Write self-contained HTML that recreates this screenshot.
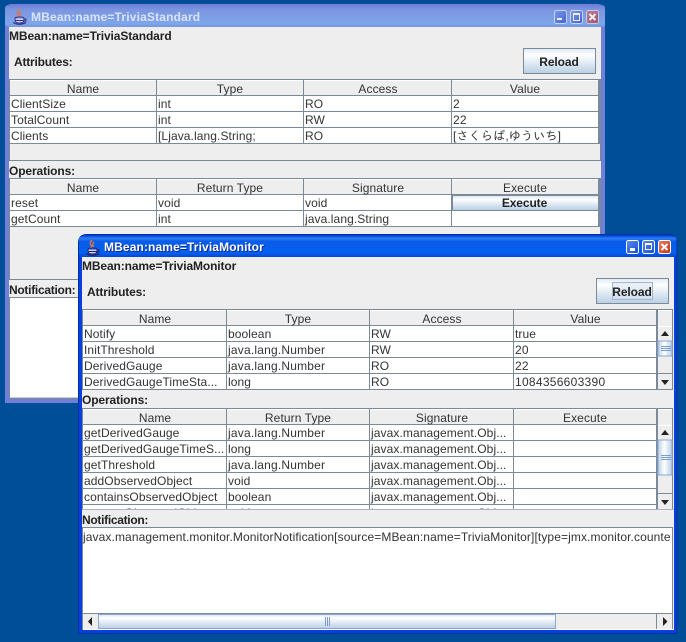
<!DOCTYPE html>
<html><head><meta charset="utf-8"><title>MBean windows</title>
<style>
html,body{margin:0;padding:0;background:#004e98;width:686px;height:642px;overflow:hidden}
svg{display:block}
text{font-family:"Liberation Sans","IPAGothic","Noto Sans CJK JP",sans-serif;font-size:12px;fill:#333;letter-spacing:.09px}
.b{font-weight:bold;fill:#222;letter-spacing:-.1px}
.n{letter-spacing:-.28px}
.c{text-anchor:middle}
.l{fill:#7a8a99}
.h{fill:#eee}
.w{fill:#fff}
.d{letter-spacing:.2px}
</style></head><body>
<svg width="686" height="642" viewBox="0 0 686 642" xmlns="http://www.w3.org/2000/svg">
<defs>
<linearGradient id="tI" x1="0" y1="0" x2="0" y2="1"><stop offset="0" stop-color="#6b80d8"/><stop offset=".2" stop-color="#7b95e0"/><stop offset=".85" stop-color="#7ea6ea"/><stop offset="1" stop-color="#7296e0"/></linearGradient>
<linearGradient id="tA" x1="0" y1="0" x2="0" y2="1"><stop offset="0" stop-color="#0a4fd8"/><stop offset=".12" stop-color="#2a80f5"/><stop offset=".25" stop-color="#0a5ce8"/><stop offset=".8" stop-color="#0560f0"/><stop offset="1" stop-color="#0348d0"/></linearGradient>
<linearGradient id="btn" x1="0" y1="0" x2="0" y2="1"><stop offset="0" stop-color="#dde8f2"/><stop offset=".25" stop-color="#fff"/><stop offset="1" stop-color="#b8cfe5"/></linearGradient>
<linearGradient id="sb" x1="0" y1="0" x2="0" y2="1"><stop offset="0" stop-color="#dde8f2"/><stop offset=".25" stop-color="#fff"/><stop offset="1" stop-color="#b8cfe5"/></linearGradient>
<linearGradient id="sv" x1="0" y1="0" x2="1" y2="0"><stop offset="0" stop-color="#b8cfe5"/><stop offset=".45" stop-color="#fff"/><stop offset="1" stop-color="#b8cfe5"/></linearGradient>
<linearGradient id="minA" x1="0" y1="0" x2="1" y2="1"><stop offset="0" stop-color="#5c8af0"/><stop offset="1" stop-color="#1c4cd0"/></linearGradient>
<linearGradient id="clA" x1="0" y1="0" x2="1" y2="1"><stop offset="0" stop-color="#e88060"/><stop offset="1" stop-color="#c83010"/></linearGradient>
<linearGradient id="minI" x1="0" y1="0" x2="1" y2="1"><stop offset="0" stop-color="#7e9ae8"/><stop offset="1" stop-color="#3f63d0"/></linearGradient>
<linearGradient id="clI" x1="0" y1="0" x2="1" y2="1"><stop offset="0" stop-color="#b88098"/><stop offset="1" stop-color="#9c5270"/></linearGradient>
<clipPath id="clipOps"><rect x="82" y="408" width="592" height="101"/></clipPath>
</defs>
<rect width="686" height="642" fill="#004e98"/>

<!-- BACK WINDOW -->
<path d="M5 403V11Q5 4 12 4H597Q605 4 605 11V403Z" fill="#6f80d6"/>
<rect x="5" y="5" width="600" height="22" fill="url(#tI)" rx="3"/>
<rect x="9" y="27" width="592" height="372" fill="#eee"/>
<g transform="translate(12,9)">
<path d="M7 0Q4 3 6 5T5 8M9 2Q7 4 8.500 7" fill="none" stroke="#e8703f" stroke-width="1.300"/>
<ellipse cx="7.500" cy="9" rx="4.500" ry="1" fill="none" stroke="#35358c"/>
<path d="M3 9.500V11Q3 14 7.500 14T12 11V9.500" fill="#c8d0f0" stroke="#35358c"/>
<path d="M3.500 11.500H11.500" stroke="#35358c"/>
<path d="M12 10H14V12H12" fill="none" stroke="#35358c"/>
<path d="M1 13.500Q7 17 14 13.500" fill="none" stroke="#35358c" stroke-width="1.300"/>
</g>
<text x="31" y="21" class="b" style="fill:#d9e4fa;letter-spacing:.17px">MBean:name=TriviaStandard</text>
<rect x="554.500" y="10.500" width="12" height="13" rx="2" fill="url(#minI)" stroke="#c5d2f2"/><rect x="557" y="18" width="5" height="2" fill="#eee"/>
<rect x="570.500" y="10.500" width="12" height="13" rx="2" fill="url(#minI)" stroke="#c5d2f2"/><rect x="573.500" y="13.500" width="6" height="7" fill="none" stroke="#eee"/><rect x="573" y="13" width="7" height="2" fill="#eee"/>
<rect x="586.500" y="10.500" width="12" height="13" rx="2" fill="url(#clI)" stroke="#d0c5d8"/><path d="M589.500 14L595.500 20M595.500 14L589.500 20" stroke="#eee" stroke-width="2"/>

<text x="9" y="40" class="b">MBean:name=TriviaStandard</text>
<text x="14" y="66" class="b" style="letter-spacing:-.2px">Attributes:</text>
<rect x="523.500" y="48.500" width="72" height="25" fill="url(#btn)" stroke="#7a8a99"/>
<text x="559" y="66" class="b c">Reload</text>

<!-- back attributes table -->
<rect x="9" y="79" width="592" height="82" class="l"/>
<rect x="10" y="80" width="590" height="80" class="h"/>
<rect x="10" y="80" width="589" height="64" class="w"/>
<rect x="10" y="80" width="589" height="15" class="h"/>
<rect x="10" y="80" width="589" height="1" class="w"/>
<rect x="10" y="95" width="589" height="1" class="l"/><rect x="10" y="111" width="589" height="1" class="l"/><rect x="10" y="127" width="589" height="1" class="l"/><rect x="10" y="143" width="589" height="1" class="l"/>
<rect x="156" y="80" width="1" height="64" class="l"/><rect x="303" y="80" width="1" height="64" class="l"/><rect x="451" y="80" width="1" height="64" class="l"/><rect x="598" y="80" width="2" height="64" class="l"/>
<text x="83" y="93" class="c">Name</text><text x="230" y="93" class="c">Type</text><text x="378" y="93" class="c">Access</text><text x="525" y="93" class="c">Value</text>
<text x="11" y="108">ClientSize</text><text x="158" y="108">int</text><text x="305" y="108">RO</text><text x="453" y="108">2</text>
<text x="11" y="124">TotalCount</text><text x="158" y="124">int</text><text x="305" y="124">RW</text><text x="453" y="124" class="d">22</text>
<text x="11" y="140">Clients</text><text x="158" y="140">[Ljava.lang.String;</text><text x="305" y="140">RO</text><text x="453" y="140" style="letter-spacing:.2px">[さくらば,ゆういち]</text>

<text x="9" y="175" class="b" style="letter-spacing:-.12px">Operations:</text>
<!-- back operations table -->
<rect x="9" y="178" width="592" height="102" class="l"/>
<rect x="10" y="179" width="590" height="100" class="h"/>
<rect x="10" y="179" width="589" height="48" class="w"/>
<rect x="10" y="179" width="589" height="15" class="h"/>
<rect x="10" y="179" width="589" height="1" class="w"/>
<rect x="10" y="194" width="589" height="1" class="l"/><rect x="10" y="210" width="589" height="1" class="l"/><rect x="10" y="226" width="589" height="1" class="l"/>
<rect x="156" y="179" width="1" height="48" class="l"/><rect x="303" y="179" width="1" height="48" class="l"/><rect x="451" y="179" width="1" height="48" class="l"/><rect x="598" y="179" width="2" height="48" class="l"/>
<text x="83" y="192" class="c">Name</text><text x="230" y="192" class="c">Return Type</text><text x="378" y="192" class="c">Signature</text><text x="525" y="192" class="c">Execute</text>
<text x="11" y="207">reset</text><text x="158" y="207">void</text><text x="305" y="207">void</text>
<text x="11" y="223">getCount</text><text x="158" y="223">int</text><text x="305" y="223">java.lang.String</text>
<rect x="452" y="195" width="147" height="16" class="l"/><rect x="453" y="196" width="145" height="14" fill="url(#btn)"/>
<text x="524.500" y="207" class="b c">Execute</text>

<rect x="9" y="279" width="592" height="18" fill="#eee"/>
<rect x="9" y="279" width="592" height="1" class="l"/>
<text x="9" y="294" class="b n">Notification:</text>
<rect x="9" y="297" width="592" height="102" class="l"/>
<rect x="10" y="298" width="590" height="100" class="w"/>
<rect x="10" y="397" width="590" height="1" fill="#c8ccdc"/>

<!-- FRONT WINDOW -->
<path d="M78 634V243Q78 234 87 234H669Q677.500 234 677.500 243V634Z" fill="#00309c"/>
<path d="M79 633V243Q79 235 87 235H669Q676.500 235 676.500 243V633Z" fill="#0840e0"/>
<rect x="79" y="236" width="597.500" height="21" fill="url(#tA)" rx="3"/>
<rect x="82" y="257" width="592" height="373" fill="#eee"/>
<g transform="translate(85,240)">
<path d="M7 0Q4 3 6 5T5 8M9 2Q7 4 8.500 7" fill="none" stroke="#f07a40" stroke-width="1.300"/>
<ellipse cx="7.500" cy="9" rx="4.500" ry="1" fill="none" stroke="#25256c"/>
<path d="M3 9.500V11Q3 14 7.500 14T12 11V9.500" fill="#c8d0f0" stroke="#25256c"/>
<path d="M3.500 11.500H11.500" stroke="#25256c"/>
<path d="M12 10H14V12H12" fill="none" stroke="#25256c"/>
<path d="M1 13.500Q7 17 14 13.500" fill="none" stroke="#25256c" stroke-width="1.300"/>
</g>
<text x="105" y="252" class="b" style="fill:#0a2a90;letter-spacing:.12px">MBean:name=TriviaMonitor</text>
<text x="104" y="251" class="b" style="fill:#fff;letter-spacing:.12px">MBean:name=TriviaMonitor</text>
<rect x="626.500" y="240.500" width="12" height="13" rx="2" fill="url(#minA)" stroke="#fff"/><rect x="630" y="248" width="5" height="3" fill="#fff"/>
<rect x="642.500" y="240.500" width="12" height="13" rx="2" fill="url(#minA)" stroke="#fff"/><rect x="645.500" y="243.500" width="6" height="6" fill="none" stroke="#fff"/><rect x="645" y="243" width="7" height="2" fill="#fff"/>
<rect x="658.500" y="240.500" width="12" height="13" rx="2" fill="url(#clA)" stroke="#fff"/><path d="M661.500 244L667.500 250M667.500 244L661.500 250" stroke="#fff" stroke-width="2"/>

<text x="82" y="270" class="b" style="letter-spacing:-.12px">MBean:name=TriviaMonitor</text>
<text x="87" y="296" class="b" style="letter-spacing:-.15px">Attributes:</text>
<rect x="596.500" y="278.500" width="72" height="25" fill="url(#btn)" stroke="#7a8a99"/>
<rect x="612.500" y="282.500" width="40" height="17" fill="#d8e4ef" fill-opacity=".5" stroke="#a3b8cc"/>
<text x="632" y="296" class="b c">Reload</text>

<!-- front attributes table -->
<rect x="82" y="309" width="591" height="81" class="l"/>
<rect x="83" y="310" width="589" height="79" class="h"/>
<rect x="83" y="325" width="574" height="64" class="w"/>
<rect x="83" y="310" width="589" height="1" class="w"/>
<rect x="83" y="325" width="574" height="1" class="l"/><rect x="83" y="341" width="574" height="1" class="l"/><rect x="83" y="357" width="574" height="1" class="l"/><rect x="83" y="373" width="574" height="1" class="l"/>
<rect x="83" y="389" width="590" height="1" class="l"/>
<rect x="226" y="310" width="1" height="79" class="l"/><rect x="369" y="310" width="1" height="79" class="l"/><rect x="513" y="310" width="1" height="79" class="l"/><rect x="656" y="310" width="2" height="79" class="l"/>
<text x="155" y="323" class="c">Name</text><text x="298" y="323" class="c">Type</text><text x="442" y="323" class="c">Access</text><text x="585.500" y="323" class="c">Value</text>
<text x="84" y="338">Notify</text><text x="228" y="338">boolean</text><text x="371" y="338">RW</text><text x="515" y="338">true</text>
<text x="84" y="354">InitThreshold</text><text x="228" y="354" class="d">java.lang.Number</text><text x="371" y="354">RW</text><text x="515" y="354" class="d">20</text>
<text x="84" y="370">DerivedGauge</text><text x="228" y="370" class="d">java.lang.Number</text><text x="371" y="370">RO</text><text x="515" y="370" class="d">22</text>
<text x="84" y="386">DerivedGaugeTimeSta...</text><text x="228" y="386">long</text><text x="371" y="386">RO</text><text x="515" y="386" style="letter-spacing:.28px">1084356603390</text>
<!-- attr scrollbar -->
<rect x="658" y="326" width="14" height="15" fill="#eee"/><rect x="658" y="326" width="14" height="1" class="w"/><path d="M661 336H669L665 331Z" fill="#222"/>
<rect x="658" y="341" width="14" height="15" fill="url(#sv)" stroke="#8aa6d8" stroke-width="1"/>
<path d="M661 346.500H671M661 348.500H671M661 350.500H671" stroke="#7a9ccf"/>
<rect x="658" y="373" width="14" height="16" fill="#eee"/><rect x="658" y="373" width="14" height="1" class="l"/><path d="M661 380H669L665 385Z" fill="#222"/>

<text x="82" y="404" class="b" style="letter-spacing:-.12px">Operations:</text>
<!-- front ops table -->
<g clip-path="url(#clipOps)">
<rect x="82" y="408" width="591" height="102" class="l"/>
<rect x="83" y="409" width="589" height="100" class="h"/>
<rect x="83" y="424" width="574" height="90" class="w"/>
<rect x="83" y="409" width="589" height="1" class="w"/>
<rect x="83" y="424" width="574" height="1" class="l"/><rect x="83" y="440" width="574" height="1" class="l"/><rect x="83" y="456" width="574" height="1" class="l"/><rect x="83" y="472" width="574" height="1" class="l"/><rect x="83" y="488" width="574" height="1" class="l"/><rect x="83" y="504" width="574" height="1" class="l"/>
<rect x="226" y="409" width="1" height="100" class="l"/><rect x="369" y="409" width="1" height="100" class="l"/><rect x="513" y="409" width="1" height="100" class="l"/><rect x="656" y="409" width="2" height="100" class="l"/>
<text x="155" y="422" class="c">Name</text><text x="298" y="422" class="c">Return Type</text><text x="442" y="422" class="c">Signature</text><text x="585" y="422" class="c">Execute</text>
<text x="84" y="437">getDerivedGauge</text><text x="228" y="437" class="d">java.lang.Number</text><text x="371" y="437">javax.management.Obj...</text>
<text x="84" y="453">getDerivedGaugeTimeS...</text><text x="228" y="453">long</text><text x="371" y="453">javax.management.Obj...</text>
<text x="84" y="469">getThreshold</text><text x="228" y="469" class="d">java.lang.Number</text><text x="371" y="469">javax.management.Obj...</text>
<text x="84" y="485">addObservedObject</text><text x="228" y="485">void</text><text x="371" y="485">javax.management.Obj...</text>
<text x="84" y="501">containsObservedObject</text><text x="228" y="501">boolean</text><text x="371" y="501">javax.management.Obj...</text>
<text x="84" y="517">removeObservedObject</text><text x="228" y="517">void</text><text x="371" y="517">javax.management.Obj...</text>
<rect x="658" y="425" width="14" height="15" fill="#eee"/><rect x="658" y="425" width="14" height="1" class="w"/><path d="M661 435H669L665 430Z" fill="#222"/>
<rect x="658" y="440" width="14" height="35" fill="url(#sv)" stroke="#8aa6d8"/>
<path d="M661 455.500H671M661 457.500H671M661 459.500H671" stroke="#7a9ccf"/>
<rect x="658" y="493" width="14" height="16" fill="#eee"/><rect x="658" y="493" width="14" height="1" class="l"/><path d="M661 500H669L665 505Z" fill="#222"/>
</g>

<rect x="82" y="509" width="592" height="18" fill="#eee"/>
<rect x="82" y="509" width="592" height="1" fill="#aab4c0"/>
<text x="82" y="524" class="b" style="letter-spacing:-.3px">Notification:</text>
<rect x="82" y="527" width="591" height="103" class="l"/>
<rect x="83" y="528" width="589" height="85" class="w"/>
<text x="83" y="541" style="letter-spacing:.1px">javax.management.monitor.MonitorNotification[source=MBean:name=TriviaMonitor][type=jmx.monitor.counte</text>
<!-- h scrollbar -->
<rect x="83" y="613" width="589" height="16" fill="#eee"/>
<rect x="83" y="613" width="589" height="1" class="l"/>
<rect x="98.500" y="614.500" width="457" height="14" fill="url(#sb)" stroke="#8aa6d8"/>
<path d="M325.500 617V626M327.500 617V626M329.500 617V626" stroke="#7a9ccf"/>
<path d="M92 617V626L88 621.500Z" fill="#222"/>
<rect x="656" y="614" width="1" height="15" class="l"/>
<path d="M663 617V626L667.500 621.500Z" fill="#222"/>
<rect x="83" y="629" width="590" height="1" class="w"/>
</svg>
</body></html>
